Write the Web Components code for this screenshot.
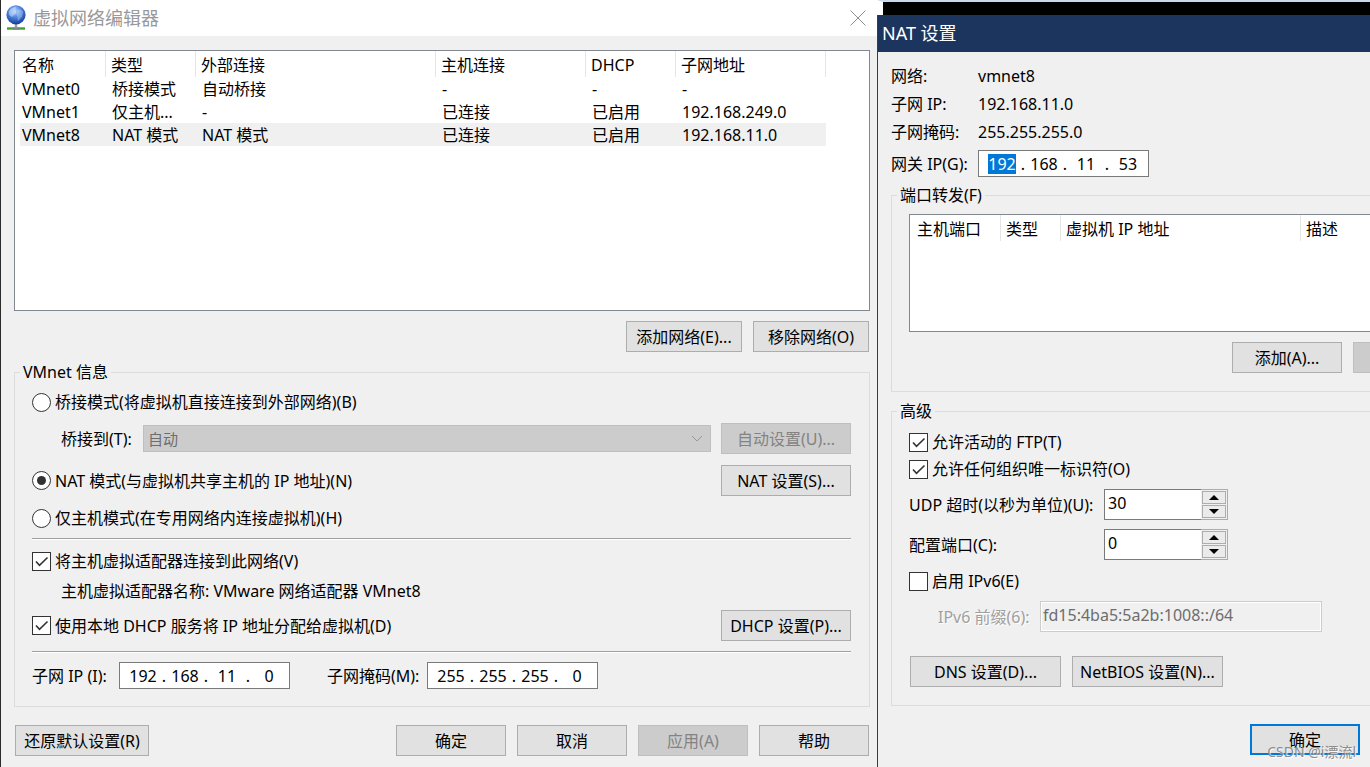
<!DOCTYPE html>
<html lang="zh-CN">
<head>
<meta charset="utf-8">
<title>虚拟网络编辑器</title>
<style>
  body { margin: 0; background: #f0f0f0; color: #000; font: 16px/24px "Noto Sans", "Noto Sans CJK SC", sans-serif; }
</style>
</head>
<body>
<network-desktop></network-desktop>

<template id="desktop">
  <style>
    :host { display: grid; grid-template-columns: minmax(0, 877fr) minmax(0, 493fr); min-height: 100vh; position: relative; overflow: hidden; }
    .side { display: flex; flex-direction: column; min-width: 0; }
    .backdrop { height: 13px; border-top: 2px solid #cbd8ee; border-left: 6px solid #fff; background: #000; }
    nat-settings { flex: 1; }
    .mark { position: absolute; right: 14px; bottom: 5px; font-size: 14px; line-height: 20px; color: #8c8c8c; text-shadow: 1px 1px 1px #fff; pointer-events: none; }
  </style>
  <network-editor></network-editor>
  <div class="side">
    <div class="backdrop"></div>
    <nat-settings></nat-settings>
  </div>
  <span class="mark">CSDN @i漂流l</span>
</template>

<template id="editor">
  <style>
    :host { display: block; border-left: 1px solid #2b2b2b; background: #f0f0f0; }
    header { display: flex; align-items: center; height: 36px; padding: 0 11px 0 4px; background: #fff; }
    h1 { flex: 1; margin: 0 0 0 6px; font-size: 18px; line-height: 36px; font-weight: 400; color: #999; }
    .close { display: flex; padding: 0; border: 0; background: none; }
    main { padding: 14px 7px 11px 13px; }
    list-view { height: 261px; }
    .row { display: flex; align-items: center; }
    .actions { justify-content: flex-end; gap: 11px; margin: 10px 1px 8px 0; }
    .actions win-button { width: 116px; }
    .side { width: 130px; }
    .indent { padding-left: 29px; }
    .grow { flex: 1; }
    .bridge { gap: 10px; margin: 9px 0 11px; }
    .bridge drop-down { flex: 1; }
    .first { margin-top: 6px; }
    .host { margin: 10px 0 8px; }
    hr { margin: 0; border: 0; border-top: 1px solid #a0a0a0; border-bottom: 1px solid #fff; }
    .adapter { margin: 9px 0 6px; }
    .dhcp { margin: 7px 0 10px; }
    .subnet { gap: 37px; margin: 9px 0 17px; }
    footer { display: flex; gap: 11px; margin: 18px 1px 0; }
    footer win-button { width: 110px; }
    footer .reset { width: 134px; margin-right: auto; }
  </style>
  <header>
    <svg width="22" height="26" viewBox="0 0 22 26" aria-hidden="true">
      <defs>
        <radialGradient id="sea" cx="45%" cy="30%" r="70%">
          <stop offset="0" stop-color="#b9d3fa"/><stop offset=".4" stop-color="#5b8fe4"/><stop offset="1" stop-color="#123c9c"/>
        </radialGradient>
      </defs>
      <path d="M2 23.500h18" stroke="#3fa02e" stroke-width="2.400"/>
      <path d="M11 19v5" stroke="#9aa0a4" stroke-width="2.500"/>
      <path d="M7.500 23.500h7" stroke="#7d8c86" stroke-width="2.500"/>
      <circle cx="11" cy="9.800" r="9.600" fill="url(#sea)"/>
      <path d="M4 6c2-3 5-4 7-4 1 1-1 2-1 3s2 1 1 3-3 2-4 4c-2-1-4-3-3-6z" fill="#cfe0fb" opacity=".55"/>
      <path d="M13 5c2-1 4 0 5 2l-1 5c-2 1-2 3-4 4-1-2 0-3-1-5s0-4 1-6z" fill="#d6e6fc" opacity=".35"/>
    </svg>
    <h1>虚拟网络编辑器</h1>
    <button class="close" aria-label="关闭"><svg width="16" height="16" viewBox="0 0 16 16"><path d="M.5.5l15 15M15.500.5l-15 15" stroke="#8f8f8f" fill="none"/></svg></button>
  </header>
  <main>
    <list-view selected="2"
      columns='[["名称",91],["类型",90],["外部连接",240],["主机连接",150],["DHCP",90],["子网地址",150]]'
      rows='[["VMnet0","桥接模式","自动桥接","-","-","-"],["VMnet1","仅主机...","-","已连接","已启用","192.168.249.0"],["VMnet8","NAT 模式","NAT 模式","已连接","已启用","192.168.11.0"]]'></list-view>
    <div class="row actions">
      <win-button>添加网络(E)...</win-button>
      <win-button>移除网络(O)</win-button>
    </div>
    <group-box label="VMnet 信息">
      <check-option class="first" type="radio">桥接模式(将虚拟机直接连接到外部网络)(B)</check-option>
      <div class="row bridge indent">
        <drop-down label="桥接到(T):" value="自动" disabled></drop-down>
        <win-button class="side" disabled>自动设置(U)...</win-button>
      </div>
      <div class="row">
        <check-option class="grow" type="radio" checked>NAT 模式(与虚拟机共享主机的 IP 地址)(N)</check-option>
        <win-button class="side">NAT 设置(S)...</win-button>
      </div>
      <check-option class="host" type="radio">仅主机模式(在专用网络内连接虚拟机)(H)</check-option>
      <hr>
      <check-option class="adapter" type="checkbox" checked>将主机虚拟适配器连接到此网络(V)</check-option>
      <div class="indent">主机虚拟适配器名称: VMware 网络适配器 VMnet8</div>
      <div class="row dhcp">
        <check-option class="grow" type="checkbox" checked>使用本地 DHCP 服务将 IP 地址分配给虚拟机(D)</check-option>
        <win-button class="side">DHCP 设置(P)...</win-button>
      </div>
      <hr>
      <div class="row subnet">
        <ip-field label="子网 IP (I):" value="192.168.11.0" style="--label: 87px"></ip-field>
        <ip-field label="子网掩码(M):" value="255.255.255.0" style="--label: 100px"></ip-field>
      </div>
    </group-box>
    <footer>
      <win-button class="reset">还原默认设置(R)</win-button>
      <win-button>确定</win-button>
      <win-button>取消</win-button>
      <win-button disabled>应用(A)</win-button>
      <win-button>帮助</win-button>
    </footer>
  </main>
</template>

<template id="nat">
  <style>
    :host { display: block; border-left: 1px solid #2b3f66; background: #f0f0f0; overflow: hidden; }
    h2 { margin: 0; padding-left: 4px; height: 37px; font-size: 18px; line-height: 37px; font-weight: 400; color: #fff; background: #1c355e; }
    main { padding: 10px 10px 12px 13px; }
    dl { display: grid; grid-template-columns: 87px 1fr; margin: 0 0 4px; line-height: 28px; }
    dd { margin: 0; }
    group-box { margin-right: -110px; }
    .forward { margin-top: 6px; }
    .advanced { margin-top: 7px; }
    list-view { height: 118px; margin-top: 7px; }
    .row { display: flex; gap: 11px; }
    .edit { justify-content: flex-end; margin: 10px -12px 18px 0; }
    .edit win-button, .ok { width: 110px; }
    .ftp { margin: 7px 0 3px; }
    .udp { margin: 8px 0 9px; }
    .ipv6 { margin: 9px 0 8px; }
    .more { margin: 24px 0 18px 1px; }
    .more win-button { width: 151px; }
    .ok { margin: 18px 0 0 auto; }
  </style>
  <h2>NAT 设置</h2>
  <main>
    <dl>
      <dt>网络:</dt><dd>vmnet8</dd>
      <dt>子网 IP:</dt><dd>192.168.11.0</dd>
      <dt>子网掩码:</dt><dd>255.255.255.0</dd>
    </dl>
    <ip-field label="网关 IP(G):" value="192.168.11.53" active style="--label: 87px"></ip-field>
    <group-box class="forward" label="端口转发(F)">
      <list-view columns='[["主机端口",91],["类型",60],["虚拟机 IP 地址",240],["描述",150]]' rows="[]"></list-view>
      <div class="row edit">
        <win-button>添加(A)...</win-button>
        <win-button disabled></win-button>
      </div>
    </group-box>
    <group-box class="advanced" label="高级">
      <check-option class="ftp" type="checkbox" checked>允许活动的 FTP(T)</check-option>
      <check-option type="checkbox" checked>允许任何组织唯一标识符(O)</check-option>
      <number-field class="udp" label="UDP 超时(以秒为单位)(U):" value="30"></number-field>
      <number-field label="配置端口(C):" value="0"></number-field>
      <check-option class="ipv6" type="checkbox">启用 IPv6(E)</check-option>
      <prefix-field label="IPv6 前缀(6):" value="fd15:4ba5:5a2b:1008::/64"></prefix-field>
      <div class="row more">
        <win-button>DNS 设置(D)...</win-button>
        <win-button>NetBIOS 设置(N)...</win-button>
      </div>
    </group-box>
    <win-button class="ok" primary>确定</win-button>
  </main>
</template>

<script>
  class Base extends HTMLElement {
    connectedCallback() {
      if (this.shadowRoot) return;
      this.attachShadow({ mode: 'open' }).innerHTML = this.render();
      this.ready();
    }
    attr(name) { return this.getAttribute(name) || ''; }
    flag(name) { return this.hasAttribute(name) ? name : ''; }
    ready() {}
  }

  const fromTemplate = id => class extends Base {
    render() { return document.getElementById(id).innerHTML; }
  };

  class WinButton extends Base {
    render() {
      return `<style>
        :host { display: block; height: 31px; }
        button { display: block; box-sizing: border-box; width: 100%; height: 100%; padding: 0; border: 1px solid #adadad; background: #e1e1e1; color: #000; font: inherit; white-space: nowrap; }
        button:disabled { border-color: #bfbfbf; background: #ccc; color: #838383; }
        :host([primary]) button { border: 2px solid #0078d7; }
      </style><button ${this.flag('disabled')}><slot></slot></button>`;
    }
  }

  class CheckOption extends Base {
    render() {
      return `<style>
        :host { display: block; }
        label { display: flex; align-items: center; gap: 4px; width: fit-content; height: 24px; white-space: nowrap; }
        input { appearance: none; box-sizing: border-box; display: grid; place-items: center; width: 19px; height: 19px; margin: 0; border: 1px solid #333; background: #fff; }
        input[type=radio] { border-radius: 50%; }
        input[type=radio]:checked::before { content: ""; width: 9px; height: 9px; border-radius: 50%; background: #333; }
        input[type=checkbox]:checked { background: #fff url('data:image/svg+xml,<svg xmlns="http://www.w3.org/2000/svg" width="17" height="17"><path d="M3 8.500l3.500 3.800L14.500 4.500" fill="none" stroke="%23333" stroke-width="1.600"/></svg>') center no-repeat; }
      </style><label><input type="${this.attr('type')}" ${this.flag('checked')}><slot></slot></label>`;
    }
    ready() {
      const input = this.shadowRoot.querySelector('input');
      if (input.type !== 'radio') return;
      input.addEventListener('change', () => {
        this.getRootNode().querySelectorAll('check-option[type=radio]').forEach(other => {
          if (other !== this) other.shadowRoot.querySelector('input').checked = false;
        });
      });
    }
  }

  class GroupBox extends Base {
    render() {
      return `<style>
        :host { display: block; }
        fieldset { min-width: 0; margin: 0; padding: 0 18px 0 17px; border: 1px solid #dcdcdc; }
        legend { margin-left: -12px; padding: 0 3px; }
      </style><fieldset><legend>${this.attr('label')}</legend><slot></slot></fieldset>`;
    }
  }

  class ListView extends Base {
    render() {
      const columns = JSON.parse(this.attr('columns'));
      const rows = JSON.parse(this.attr('rows'));
      const selected = this.attr('selected');
      const total = columns.reduce((sum, c) => sum + c[1], 0);
      return `<style>
        :host { display: block; box-sizing: border-box; border: 1px solid #828790; background: #fff; overflow: hidden; }
        table { table-layout: fixed; width: ${total}px; border-collapse: separate; border-spacing: 0; }
        th, td { padding: 2px 0 0 6px; text-align: left; font-weight: 400; white-space: nowrap; line-height: 21px; }
        th { padding: 3px 0 0 5px; border-right: 1px solid #e5e5e5; line-height: 23px; }
        th:first-child, td:first-child { padding-left: 7px; }
        .on td { background: #f0f0f0; }
        .on td:first-child { background: linear-gradient(to right, #fff 5px, #f0f0f0 5px); }
      </style><table>
        <colgroup>${columns.map(c => `<col style="width:${c[1]}px">`).join('')}</colgroup>
        <thead><tr>${columns.map(c => `<th scope="col">${c[0]}</th>`).join('')}</tr></thead>
        <tbody>${rows.map((r, i) => `<tr class="${String(i) === selected ? 'on' : ''}">${r.map(c => `<td>${c}</td>`).join('')}</tr>`).join('')}</tbody>
      </table>`;
    }
  }

  class DropDown extends Base {
    render() {
      return `<style>
        :host { display: flex; align-items: center; }
        label { flex: none; width: 82px; }
        select { appearance: none; box-sizing: border-box; flex: 1; min-width: 0; height: 27px; margin: 0; padding: 0 4px; border: 1px solid #bfbfbf; border-radius: 0; color: #6d6d6d; opacity: 1; font: inherit; font-size: 15px;
          background: #ccc url('data:image/svg+xml,<svg xmlns="http://www.w3.org/2000/svg" width="12" height="8"><path d="M1 1l5 5 5-5" fill="none" stroke="%23999"/></svg>') right 7px center no-repeat; }
      </style><label for="list">${this.attr('label')}</label><select id="list" ${this.flag('disabled')}><option>${this.attr('value')}</option></select>`;
    }
  }

  class IpField extends Base {
    render() {
      const parts = this.attr('value').split('.');
      return `<style>
        :host { display: flex; align-items: center; }
        label { width: var(--label); white-space: nowrap; }
        .box { display: flex; align-items: center; box-sizing: border-box; width: 171px; height: 27px; padding-left: 6px; border: 1px solid #7a7a7a; background: #fff; }
        input { width: 34px; height: 20px; margin: 0; padding: 0; border: 0; outline: 0; background: none; color: inherit; font: inherit; line-height: 20px; text-align: center; }
        input::selection { background: #0078d7; color: #fff; }
        .dot { width: 8px; text-align: center; }
      </style><label for="p0">${this.attr('label')}</label><div class="box">${parts.map((p, i) => `<input id="p${i}" value="${p}" maxlength="3" aria-label="${this.attr('label')} ${i + 1}">`).join('<span class="dot">.</span>')}</div>`;
    }
    ready() {
      if (!this.hasAttribute('active')) return;
      const first = this.shadowRoot.getElementById('p0');
      first.focus();
      first.select();
    }
  }

  class NumberField extends Base {
    render() {
      return `<style>
        :host { display: flex; align-items: center; }
        label { width: 195px; white-space: nowrap; }
        .box { display: flex; box-sizing: border-box; width: 124px; height: 31px; border: 1px solid #ababb3; background: #f0f0f0; }
        input { flex: 1; min-width: 0; margin: -1px 0 -1px -1px; padding: 0 3px 4px; border: 1px solid #7a7a7a; border-right: 0; outline: 0; background: #fff; font: inherit; }
        .spin { display: grid; gap: 1px; width: 24px; padding: 1px; }
        button { display: grid; place-items: center; padding: 0; border: 1px solid #adadad; background: #ebebeb; }
      </style><label for="n">${this.attr('label')}</label><div class="box"><input id="n" value="${this.attr('value')}" inputmode="numeric">
        <div class="spin">
          <button aria-label="增加"><svg width="10" height="5" viewBox="0 0 10 5"><path d="M0 5l5-5 5 5z"/></svg></button>
          <button aria-label="减少"><svg width="10" height="5" viewBox="0 0 10 5"><path d="M0 0l5 5 5-5z"/></svg></button>
        </div></div>`;
    }
    ready() {
      const input = this.shadowRoot.querySelector('input');
      this.shadowRoot.querySelectorAll('button').forEach((b, i) => b.addEventListener('click', () => {
        input.value = Math.max(0, Number(input.value) + (i ? -1 : 1));
      }));
    }
  }

  class PrefixField extends Base {
    render() {
      return `<style>
        :host { display: flex; align-items: center; padding-left: 29px; }
        label { width: 102px; color: #a0a0a0; text-shadow: 1px 1px #fff; white-space: nowrap; }
        input { box-sizing: border-box; width: 282px; height: 31px; margin: 0; padding: 0 2px 4px; border: 1px solid #ccc; box-shadow: inset 0 0 0 1px #fff; background: #f0f0f0; color: #6d6d6d; font: inherit; }
      </style><label for="v">${this.attr('label')}</label><input id="v" value="${this.attr('value')}" disabled>`;
    }
  }

  customElements.define('win-button', WinButton);
  customElements.define('check-option', CheckOption);
  customElements.define('group-box', GroupBox);
  customElements.define('list-view', ListView);
  customElements.define('drop-down', DropDown);
  customElements.define('ip-field', IpField);
  customElements.define('number-field', NumberField);
  customElements.define('prefix-field', PrefixField);
  customElements.define('network-editor', fromTemplate('editor'));
  customElements.define('nat-settings', fromTemplate('nat'));
  customElements.define('network-desktop', fromTemplate('desktop'));
</script>
</body>
</html>
